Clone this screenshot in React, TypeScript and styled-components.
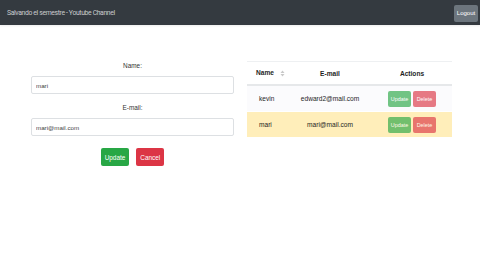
import { createGlobalStyle, styled } from "styled-components";

const GlobalStyle = createGlobalStyle`
  html, body {
    margin: 0;
    padding: 0;
    background: #fff;
    font-family: "Liberation Sans", Arial, sans-serif;
  }
`;

const users = [
  { name: "kevin", email: "edward2@mail.com", active: false },
  { name: "mari", email: "mari@mail.com", active: true },
];

const App = () => {
  return (
    <>
      <GlobalStyle />
      <Navbar>
        <Brand>Salvando el semestre - Youtube Channel</Brand>
        <LogoutButton>Logout</LogoutButton>
      </Navbar>
      <Content>
        <FormColumn>
          <Label>Name:</Label>
          <Input defaultValue="mari" />
          <Label>E-mail:</Label>
          <Input defaultValue="mari@mail.com" />
          <FormActions>
            <Button $variant="success">Update</Button>
            <Button $variant="danger">Cancel</Button>
          </FormActions>
        </FormColumn>
        <TableColumn>
          <Table>
            <thead>
              <tr>
                <Th>
                  Name
                  <SortIcon width="5" height="7" viewBox="0 0 5 7">
                    <path d="M2.5 0.5 L4.5 3 L0.5 3 Z" fill="#c8c8c8" />
                    <path d="M2.5 6.5 L4.5 4 L0.5 4 Z" fill="#c8c8c8" />
                  </SortIcon>
                </Th>
                <Th>E-mail</Th>
                <Th>Actions</Th>
              </tr>
            </thead>
            <tbody>
              {users.map((u) => (
                <Row key={u.name} $active={u.active}>
                  <Td>{u.name}</Td>
                  <Td>{u.email}</Td>
                  <Td>
                    <RowActions>
                      <SmallButton $variant="success">Update</SmallButton>
                      <SmallButton $variant="danger">Delete</SmallButton>
                    </RowActions>
                  </Td>
                </Row>
              ))}
            </tbody>
          </Table>
        </TableColumn>
      </Content>
    </>
  );
};

export default App;

const Navbar = styled.div`
  height: 25px;
  background: #343a40;
  display: flex;
  align-items: center;
  justify-content: space-between;
  padding: 0 2px 0 7px;
  box-shadow: 0 1px 2px rgba(0, 0, 0, 0.08);
`;

const Brand = styled.div`
  color: #c9cbcd;
  font-family: Roboto, "Liberation Sans", sans-serif;
  font-size: 6.8px;
  letter-spacing: -0.35px;
`;

const LogoutButton = styled.button`
  background: #6c757d;
  color: #fff;
  border: none;
  border-radius: 2px;
  height: 17px;
  width: 24px;
  padding: 0;
  font-family: inherit;
  font-size: 6px;
  margin-top: 1px;
`;

const Content = styled.div`
  display: grid;
  grid-template-columns: 216px 216px;
  padding: 0 24px;
`;

const FormColumn = styled.div`
  display: flex;
  flex-direction: column;
  align-items: center;
  padding: 37px 6px 0 7px;
`;

const Label = styled.div`
  font-size: 6.4px;
  color: #333;
  margin-bottom: 7px;
`;

const Input = styled.input`
  box-sizing: border-box;
  width: 100%;
  height: 18px;
  border: 1px solid #dde0e3;
  border-radius: 2px;
  padding: 0 4px;
  font-family: inherit;
  font-size: 6.2px;
  color: #444;
  margin-bottom: 10px;
  outline: none;
`;

const FormActions = styled.div`
  display: flex;
  gap: 7px;
  margin-top: 2px;
`;

const variants = {
  success: "#28a745",
  danger: "#dc3545",
};

const Button = styled.button<{ $variant: "success" | "danger" }>`
  background: ${(p) => variants[p.$variant]};
  color: #fff;
  border: none;
  border-radius: 2px;
  height: 18px;
  padding: 0 4px;
  min-width: 28px;
  font-family: inherit;
  font-size: 6.4px;
`;

const TableColumn = styled.div`
  padding: 36px 4px 0 7px;
`;

const Table = styled.table`
  width: 100%;
  border-collapse: collapse;
  table-layout: fixed;
  font-size: 6.6px;
  color: #1e1e1e;
  border-top: 1px solid #eef0f2;
`;

const Th = styled.th`
  height: 22px;
  padding: 0;
  border-bottom: 2px solid #e6e8ea;
  font-weight: bold;
  text-align: center;
  &:first-child {
    text-align: left;
    padding-left: 9px;
    width: 32px;
  }
  &:nth-child(2) {
    width: 84px;
  }
`;

const SortIcon = styled.svg`
  margin-left: 6px;
  vertical-align: middle;
`;

const Row = styled.tr<{ $active: boolean }>`
  background: ${(p) => (p.$active ? "#ffeeba" : "#fbfbfd")};
  border-top: 1px solid ${(p) => (p.$active ? "#fff" : "#eef0f2")};
`;

const Td = styled.td<{}>`
  height: 25px;
  padding: 0;
  text-align: center;
  &:first-child {
    text-align: left;
    padding-left: 12px;
  }
`;

const RowActions = styled.div`
  display: flex;
  justify-content: center;
  gap: 2px;
`;

const SmallButton = styled.button<{ $variant: "success" | "danger" }>`
  background: ${(p) => variants[p.$variant]};
  opacity: 0.65;
  color: #fff;
  border: none;
  border-radius: 2px;
  height: 16px;
  width: 23px;
  padding: 0;
  font-family: inherit;
  font-size: 5.4px;
`;
